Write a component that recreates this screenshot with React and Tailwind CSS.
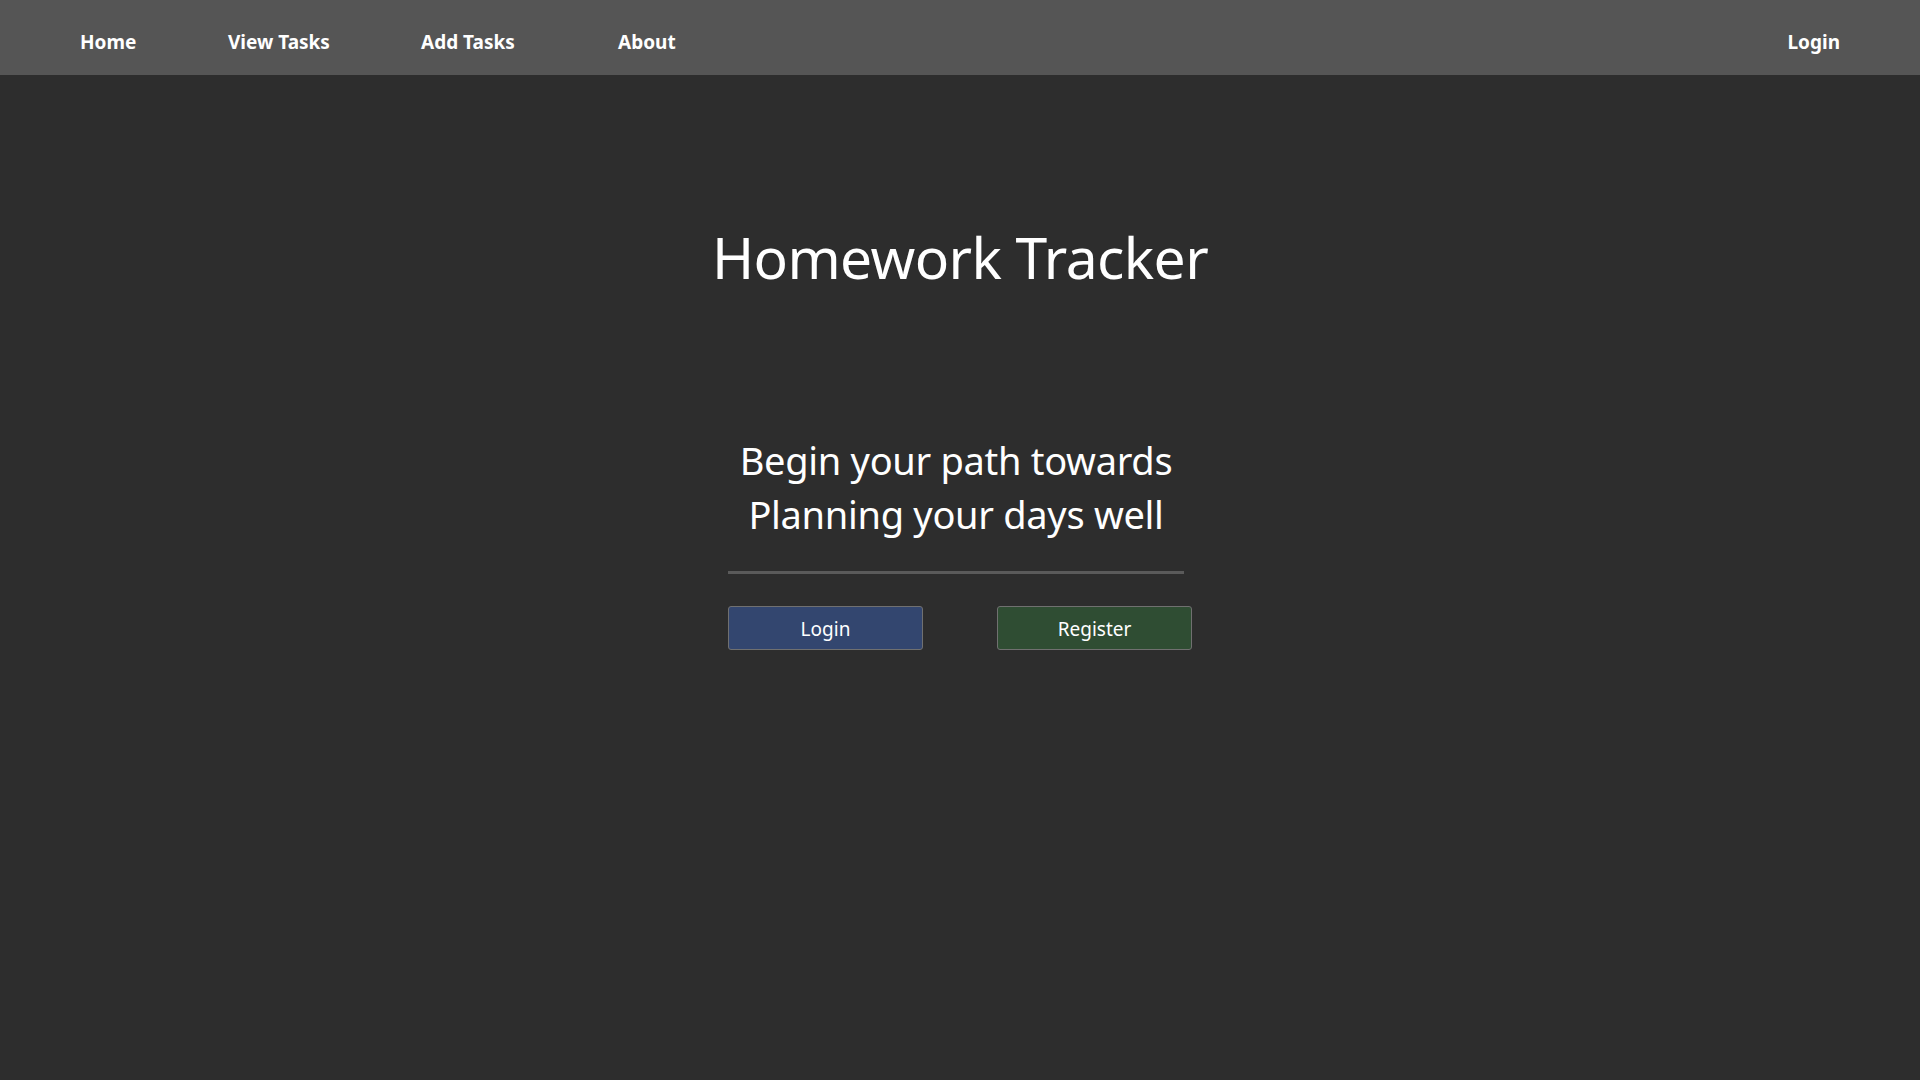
import React from 'react';

const navLinks = [
  { label: 'Home', width: 'w-[148px]' },
  { label: 'View Tasks', width: 'w-[193px]' },
  { label: 'Add Tasks', width: 'w-[197px]' },
  { label: 'About', width: 'w-[120px]' },
];

export default function App() {
  return (
    <div className="min-h-screen bg-[#2d2d2d] text-white font-['Noto_Sans','Open_Sans',sans-serif]">
      {/* Top nav */}
      <nav className="h-[75px] bg-[#555555] flex items-center pl-[80px] pr-[80px] pt-[10px]">
        {navLinks.map((link) => (
          <a key={link.label} href="#" className={`${link.width} text-[19px] font-bold leading-none`}>
            {link.label}
          </a>
        ))}
        <a href="#" className="ml-auto text-[19px] font-bold leading-none">Login</a>
      </nav>

      <main className="flex flex-col items-center">
        <h1 className="mt-[148px] text-[57px] font-normal leading-[1.2] tracking-[-0.6px]">Homework Tracker</h1>

        <div className="mt-[142px] w-[464px] flex flex-col">
          <p className="w-[456px] text-[38px] leading-[54px] text-center tracking-[-0.3px]">
            Begin your path towards
            <br />
            Planning your days well
          </p>

          <hr className="mt-[30px] w-[456px] border-0 border-t-[3px] border-[#5a5a5a]" />

          <div className="mt-[32px] w-full flex justify-between">
            <button className="w-[195px] h-[44px] bg-[#33466f] border border-[#707070] rounded-[3px] text-[19px] text-white pt-[1px]">
              Login
            </button>
            <button className="w-[195px] h-[44px] bg-[#2f4d33] border border-[#707070] rounded-[3px] text-[19px] text-white pt-[1px]">
              Register
            </button>
          </div>
        </div>
      </main>
    </div>
  );
}
